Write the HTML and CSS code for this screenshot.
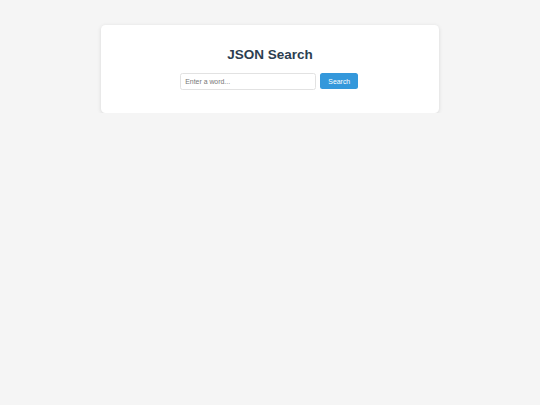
FILE: index.html
```html
<!DOCTYPE html>
<html lang="en">
<head>
<meta charset="utf-8">
<title>JSON Search</title>
<link rel="stylesheet" href="styles.css">
</head>
<body>
<main class="card">
  <h1 class="title">JSON Search</h1>
  <form class="search-row" onsubmit="return false;">
    <input class="search-input" type="text" placeholder="Enter a word...">
    <button class="search-btn" type="submit">Search</button>
  </form>
</main>
</body>
</html>
```
FILE: styles.css
```css
html, body {
  margin: 0;
  padding: 0;
}
body {
  background: #f5f5f5;
  font-family: "Liberation Sans", Arial, sans-serif;
  padding-top: 25px;
}
.card {
  width: 338px;
  box-sizing: border-box;
  margin: 0 auto;
  background: #ffffff;
  border-radius: 4.5px;
  box-shadow: 0 1px 4px rgba(0, 0, 0, 0.12);
  padding: 21.75px 20px 23px;
  text-align: center;
}
.title {
  margin: 0 0 11px;
  font-size: 13.5px;
  font-weight: bold;
  color: #2c3e50;
  line-height: normal;
}
.search-row {
  display: flex;
  justify-content: center;
  align-items: center;
  gap: 4.5px;
  margin: 0;
  padding-right: 2px;
}
.search-input {
  width: 136px;
  height: 17px;
  box-sizing: border-box;
  border: 1px solid #e2e2e2;
  border-radius: 2.5px;
  padding: 0 4.5px;
  font-family: "Liberation Sans", Arial, sans-serif;
  font-size: 6.9px;
  color: #333;
  outline: none;
}
.search-input::placeholder {
  color: #777;
}
.search-btn {
  width: 38px;
  height: 16px;
  box-sizing: border-box;
  border: none;
  border-radius: 2.5px;
  background: #3498db;
  color: #ffffff;
  font-family: "Liberation Sans", Arial, sans-serif;
  font-size: 6.9px;
  padding: 0;
  cursor: pointer;
}
```
